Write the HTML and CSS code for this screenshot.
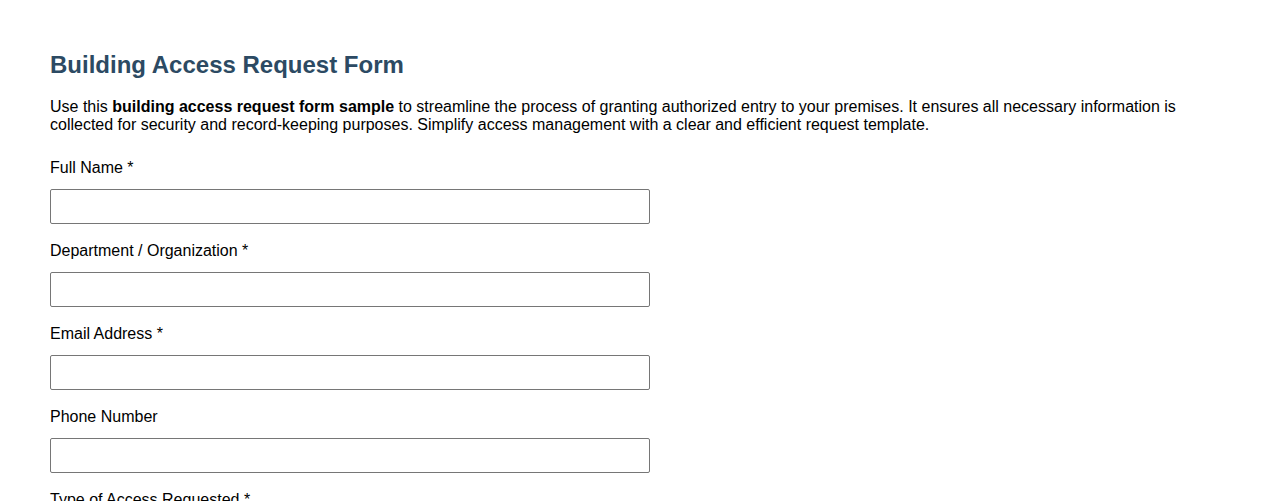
FILE: index.html
```html
<!DOCTYPE html>
<html lang="en">
<head>
<meta charset="utf-8">
<title>Building Access Request Form</title>
<link rel="stylesheet" href="styles.css">
</head>
<body>
<div class="page">
  <h1 class="title">Building Access Request Form</h1>
  <p class="intro">Use this <strong>building access request form sample</strong> to streamline the process of granting authorized entry to your premises. It ensures all necessary information is collected for security and record-keeping purposes. Simplify access management with a clear and efficient request template.</p>
  <form class="form">
    <div class="field">
      <label class="label" for="name">Full Name *</label>
      <input class="input" id="name" type="text">
    </div>
    <div class="field">
      <label class="label" for="dept">Department / Organization *</label>
      <input class="input" id="dept" type="text">
    </div>
    <div class="field">
      <label class="label" for="email">Email Address *</label>
      <input class="input" id="email" type="email">
    </div>
    <div class="field">
      <label class="label" for="phone">Phone Number</label>
      <input class="input" id="phone" type="tel">
    </div>
    <div class="field">
      <label class="label" for="type">Type of Access Requested *</label>
      <input class="input" id="type" type="text">
    </div>
  </form>
</div>
</body>
</html>
```
FILE: styles.css
```css
html, body {
  margin: 0;
  padding: 0;
  background: #ffffff;
}
body {
  font-family: "Liberation Sans", Arial, sans-serif;
  font-size: 16px;
  color: #000000;
}
.page {
  padding: 51px 50px 40px;
}
.title {
  margin: 0 0 19px;
  font-size: 24px;
  font-weight: bold;
  color: #2c4a63;
}
.intro {
  margin: 0 0 24px;
  line-height: 18.4px;
}
.form {
  display: flex;
  flex-direction: column;
  gap: 18px;
}
.field {
  display: flex;
  flex-direction: column;
  gap: 12px;
  align-items: flex-start;
}
.label {
  display: block;
}
.input {
  box-sizing: border-box;
  width: 600px;
  height: 35px;
  margin: 0;
  padding: 6px 8px;
  border: 1px solid #767676;
  border-radius: 2px;
  font-family: inherit;
  font-size: 16px;
  background: #fff;
}
```
